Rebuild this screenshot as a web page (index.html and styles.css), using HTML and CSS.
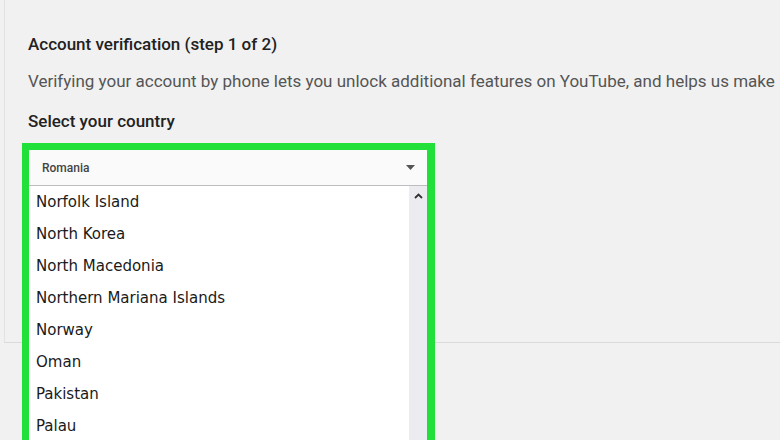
FILE: index.html
```html
<!DOCTYPE html>
<html lang="en">
<head>
    <meta charset="UTF-8">
    <meta name="viewport" content="width=device-width, initial-scale=1.0">
    <title>Account verification</title>
    <link rel="stylesheet" href="styles.css">
</head>
<body>
    <div class="card">
        <h1 class="title">Account verification (step 1 of 2)</h1>
        <p class="intro">Verifying your account by phone lets you unlock additional features on YouTube, and helps us make</p>
        <h2 class="label">Select your country</h2>
        <div class="highlight">
            <div class="select">
                <span>Romania</span>
                <svg class="caret" width="9" height="5" viewBox="0 0 9 5"><path d="M0 0h9L4.5 5z" fill="#555"/></svg>
            </div>
            <div class="dropdown">
                <ul class="options">
                    <li>Norfolk Island</li>
                    <li>North Korea</li>
                    <li>North Macedonia</li>
                    <li>Northern Mariana Islands</li>
                    <li>Norway</li>
                    <li>Oman</li>
                    <li>Pakistan</li>
                    <li>Palau</li>
                </ul>
                <div class="scrollbar">
                    <svg width="9" height="6" viewBox="0 0 9 6"><path d="M1 5L4.5 1.5 8 5" fill="none" stroke="#333" stroke-width="1.8"/></svg>
                </div>
            </div>
        </div>
    </div>
</body>
</html>
```

FILE: styles.css
```css
body {
    margin: 0;
    background-color: #f1f1f1;
    font-family: Roboto, Arial, sans-serif;
    overflow: hidden;
    height: 440px;
}
.card {
    margin-left: 4px;
    height: 343px;
    border-left: 1px solid #e2e2e2;
    border-bottom: 1px solid #dadada;
    padding: 33px 0 0 23px;
    box-sizing: border-box;
}
.title {
    margin: 0;
    font-size: 17px;
    font-weight: 500;
    color: #222;
    line-height: 22px;
}
.intro {
    margin: 15px 0 0;
    font-size: 17px;
    color: #555;
    line-height: 22px;
    white-space: nowrap;
}
.label {
    margin: 18px 0 0;
    font-size: 17px;
    font-weight: 500;
    color: #222;
    line-height: 22px;
}
.highlight {
    margin: 11px 0 0 -6px;
    width: 398px;
    border: 7px solid #22e03a;
    border-right-width: 8px;
    border-bottom: none;
    background-color: #fff;
}
.select {
    height: 35px;
    display: flex;
    align-items: center;
    justify-content: space-between;
    padding: 0 12px 0 13px;
    border-bottom: 1px solid #bdbdbd;
    background-color: #fafafa;
    font-size: 12px;
    font-weight: 500;
    color: #444;
}
.dropdown {
    display: flex;
}
.options {
    list-style: none;
    margin: 0;
    padding: 0;
    flex: 1;
    font-family: "DejaVu Sans Condensed", "DejaVu Sans", sans-serif;
    font-size: 16.7px;
    color: #1a1a1a;
}
.options li {
    height: 32px;
    line-height: 30px;
    padding: 0 0 2px 7px;
    box-sizing: border-box;
}
.scrollbar {
    width: 18px;
    background-color: #ececf0;
    display: flex;
    justify-content: center;
    align-items: flex-start;
    padding-top: 7px;
}
```
